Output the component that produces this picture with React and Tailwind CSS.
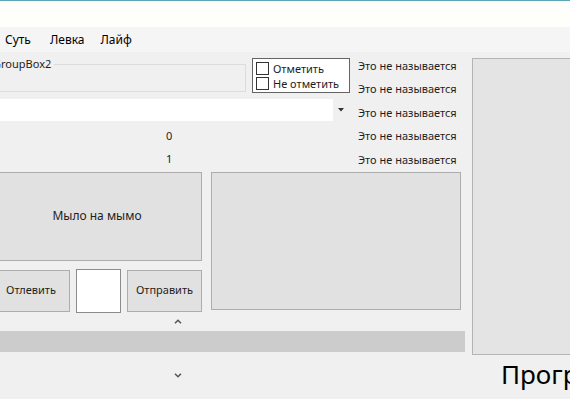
const labels = ["Это не называется", "Это не называется", "Это не называется", "Это не называется", "Это не называется"];

function Chevron({ up }) {
  return (
    <svg width="8" height="5" viewBox="0 0 8 5" className="block">
      <path
        d={up ? "M1 4.2 L4 1.2 L7 4.2" : "M1 0.8 L4 3.8 L7 0.8"}
        fill="none"
        stroke="#555"
        strokeWidth="1.5"
      />
    </svg>
  );
}

function CheckRow({ text }) {
  return (
    <div className="flex items-center h-[14px]">
      <span className="w-[13px] h-[13px] border border-[#333] bg-white shrink-0" />
      <span className="ml-[4px] leading-none">{text}</span>
    </div>
  );
}

export default function App() {
  return (
    <div className="w-[570px] h-[399px] overflow-hidden bg-[#f0f0f0] flex flex-col font-['Noto_Sans',sans-serif] text-[11px] text-[#1e1e1e]">
      {/* title bar */}
      <div className="h-px bg-[#5aa6b6] shrink-0" />
      <div className="h-[26px] bg-[#fefffb] shrink-0" />

      {/* menu */}
      <div className="h-[25px] bg-[#f5f5f5] flex items-center text-[12px] text-black shrink-0">
        <span className="ml-[5px]">Суть</span>
        <span className="ml-[19px]">Левка</span>
        <span className="ml-[16px]">Лайф</span>
      </div>

      {/* form body, scrolled a few px to the left */}
      <div className="flex flex-1 min-h-0">
        <div className="w-[465px] shrink-0 flex flex-col">
          <div className="flex">
            <div className="w-[350px] flex flex-col">
              <div className="flex h-[40px] items-start">
                <div className="relative mt-[12px] w-[246px] h-[28px] border border-l-0 border-[#dcdcdc]">
                  <span className="absolute -top-[9px] -left-[7px] bg-[#f0f0f0] pr-[3px] leading-[16px]">GroupBox2</span>
                </div>
                <div className="ml-[6px] mt-[6px] w-[98px] h-[35px] border border-[#646464] bg-white flex flex-col justify-start pt-[2px] gap-[1px] pl-[3px]">
                  <CheckRow text="Отметить" />
                  <CheckRow text="Не отметить" />
                </div>
              </div>

              <div className="mt-[7px] h-[22px] w-[349px] bg-white flex justify-end">
                <div className="w-[16px] h-full bg-[#f0f0f0] flex items-center justify-center">
                  <svg width="6" height="4" viewBox="0 0 6 4">
                    <path d="M0 0 H6 L3 3.5 Z" fill="#333" />
                  </svg>
                </div>
              </div>

              <div className="mt-[4px] h-[23px] flex items-center pl-[166px]">0</div>
              <div className="h-[23px] flex items-center pl-[166px]">1</div>
            </div>

            <div className="ml-[8px] pt-[2px] flex flex-col whitespace-nowrap">
              {labels.map((t, i) => (
                <div key={i} className="h-[23.5px] flex items-center">{t}</div>
              ))}
            </div>
          </div>

          <div className="flex">
            <div className="w-[202px] flex flex-col">
              <div className="-ml-[8px] w-[210px] h-[89px] bg-[#e1e1e1] border border-[#adadad] flex items-center justify-center text-[12px]">
                Мыло на мымо
              </div>
              <div className="mt-[8px] flex items-start">
                <div className="-ml-[8px] mt-[1px] w-[78px] h-[42px] bg-[#e1e1e1] border border-[#adadad] flex items-center justify-center">
                  Отлевить
                </div>
                <div className="ml-[6px] w-[45px] h-[44px] bg-white border border-[#8c8c8c]" />
                <div className="ml-[6px] mt-[1px] w-[75px] h-[42px] bg-[#e1e1e1] border border-[#adadad] flex items-center justify-center">
                  Отправить
                </div>
              </div>
            </div>
            <div className="ml-[9px] w-[250px] h-[138px] bg-[#e1e1e1] border border-[#adadad]" />
          </div>

          <div className="h-[19px] flex items-center pl-[174px]">
            <Chevron up />
          </div>
          <div className="h-[21px] w-[465px] bg-[#cccccc]" />
          <div className="h-[47px] flex items-center pl-[174px]">
            <Chevron />
          </div>
        </div>

        <div className="ml-[7px] flex flex-col shrink-0">
          <div className="mt-[6px] w-[110px] h-[297px] bg-[#e4e4e4] border border-[#b4b4b4]" />
          <div className="mt-[4px] ml-[29px] text-[26px] leading-[31px] text-black whitespace-nowrap">Программа</div>
        </div>
      </div>
    </div>
  );
}
